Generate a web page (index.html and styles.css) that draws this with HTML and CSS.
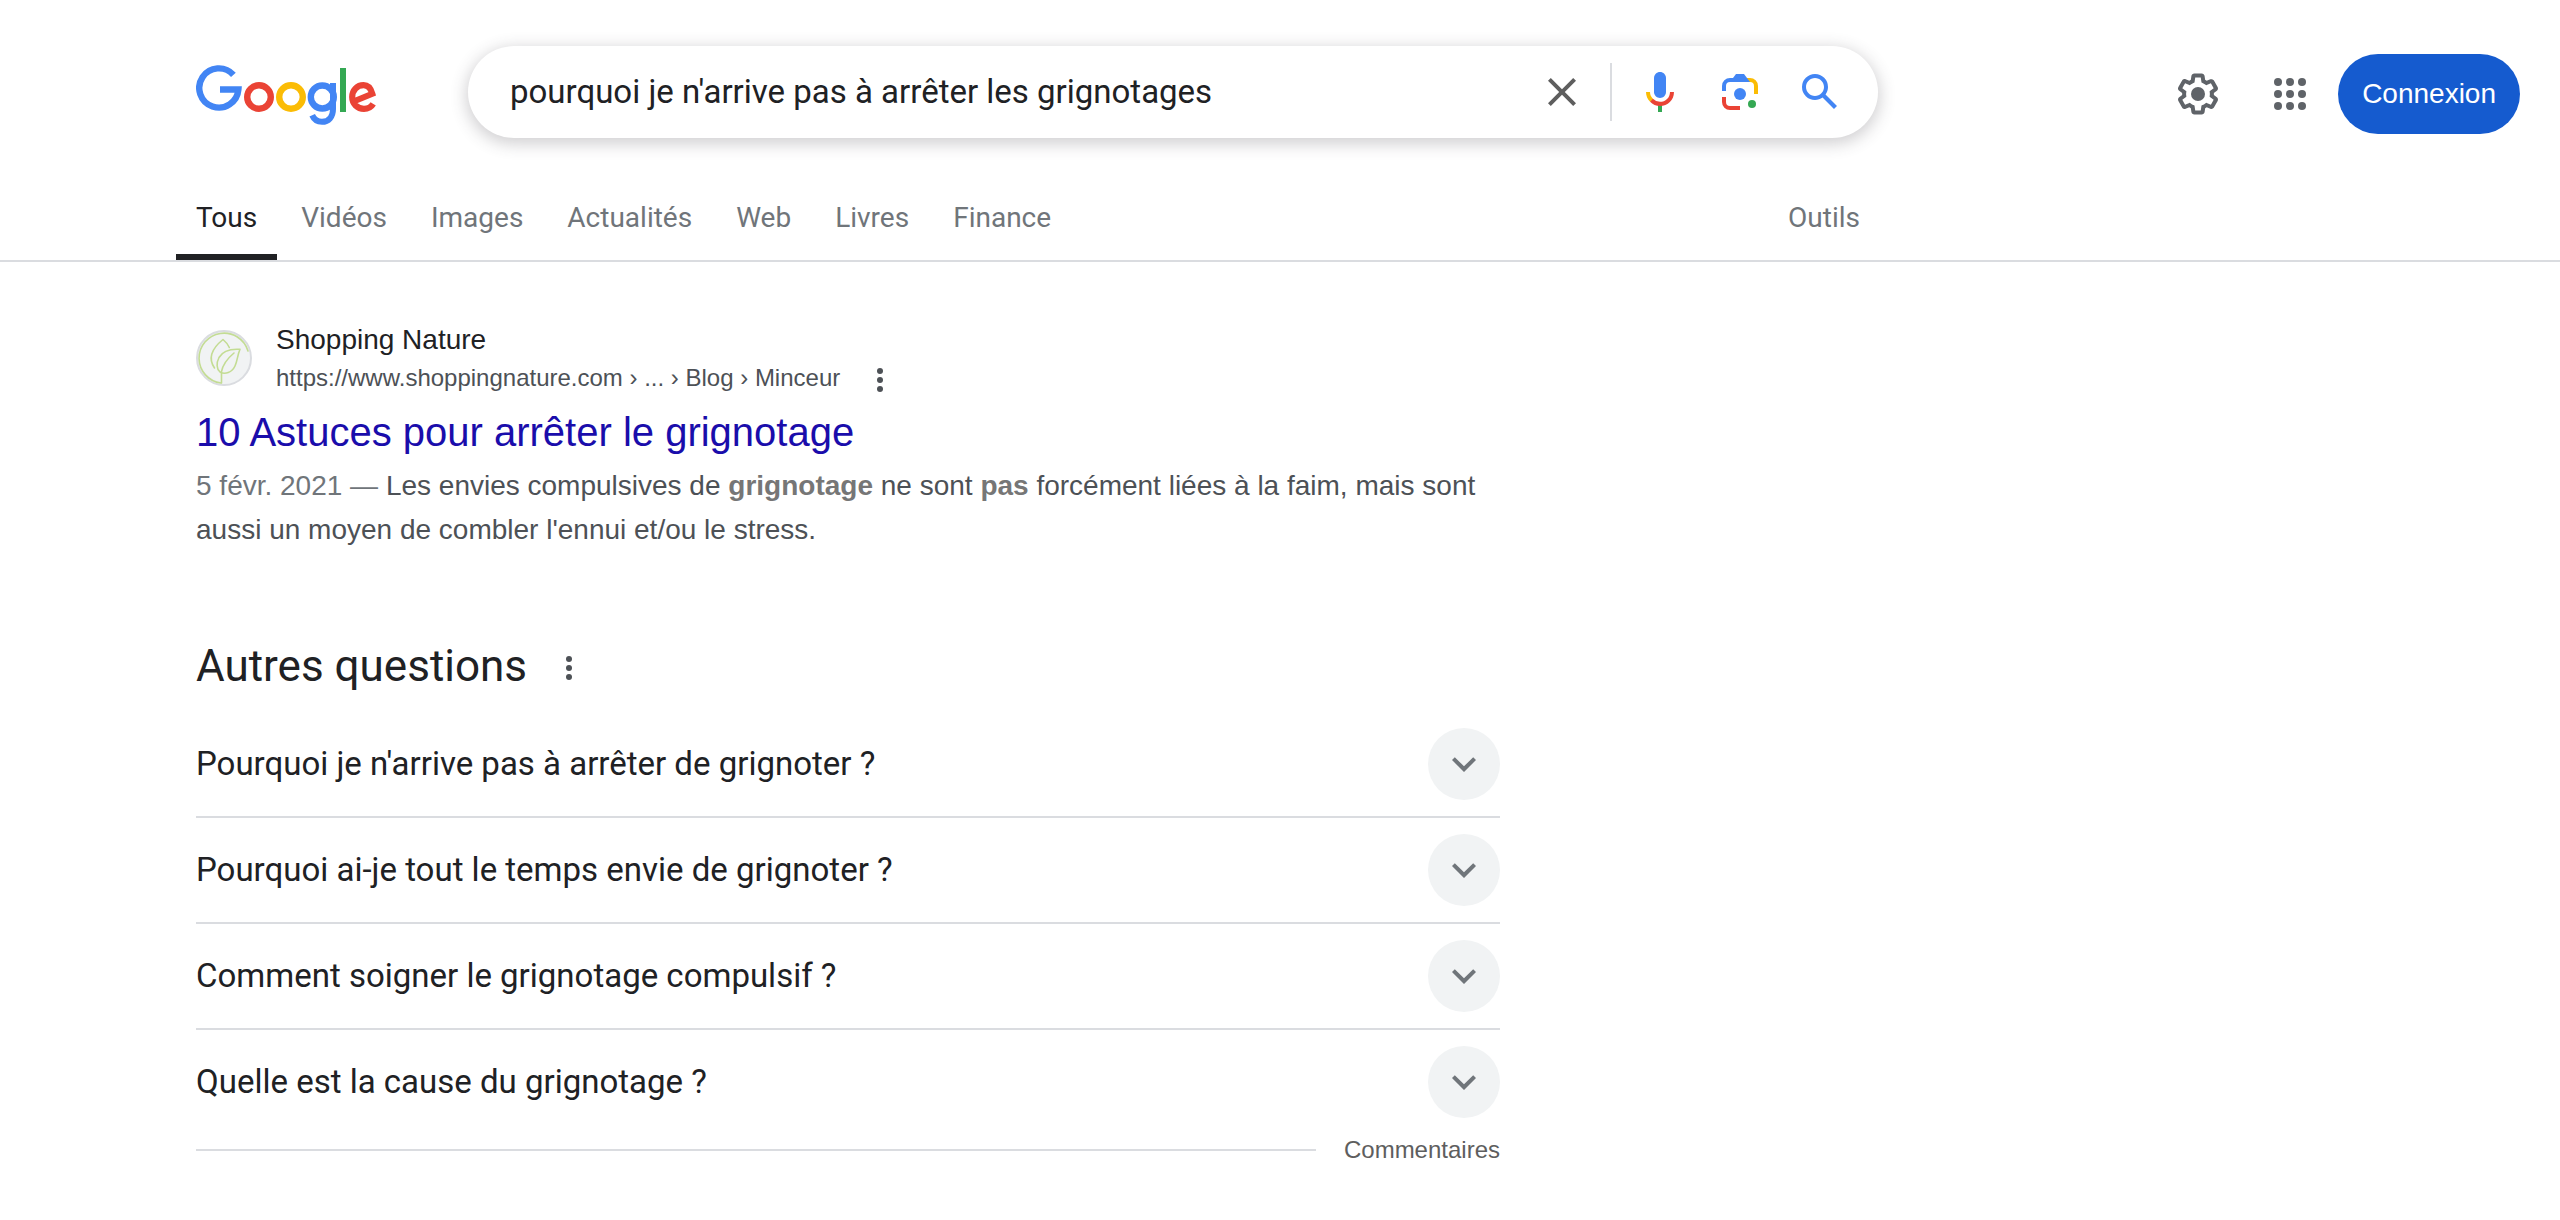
FILE: index.html
```html
<!DOCTYPE html>
<html lang="fr">
<head>
<meta charset="utf-8">
<title>pourquoi je n'arrive pas à arrêter les grignotages - Recherche Google</title>
<meta name="viewport" content="width=device-width, initial-scale=1">
<link rel="stylesheet" href="styles.css">
</head>
<body>
<header class="header">
  <a class="logo" href="#" aria-label="Google">
    <svg width="184" height="72" viewBox="0 0 184 72" fill="none" stroke-width="6.4" aria-hidden="true">
      <path stroke="#4285f4" d="M37.400 18.800A19.600 19.600 0 1 0 42.400 33.500H24"/>
      <circle cx="63" cy="41" r="11.800" stroke="#ea4335"/>
      <circle cx="95" cy="41" r="11.800" stroke="#fbbc05"/>
      <circle cx="126.300" cy="41" r="11.500" stroke="#4285f4"/>
      <path stroke="#4285f4" stroke-width="6" d="M137 27V53c0 8-4.500 12.800-11 12.800-5 0-8.200-2.800-9.800-6.500"/>
      <path stroke="#34a853" stroke-width="6" d="M147 12v44"/>
      <path stroke="#ea4335" stroke-width="6.200" d="M157.500 45.500L176.300 37.800C174.800 32.500 171.500 29.200 167.600 29.200C161 29.200 156.200 34.500 156.200 41C156.200 47.800 161.300 52.800 168 52.800C172 52.800 175.200 51 177.200 47.800"/>
    </svg>
  </a>
  <form class="search" role="search">
    <input class="search-input" type="text" aria-label="Rechercher" value="pourquoi je n'arrive pas à arrêter les grignotages">
    <button class="icon-button clear" type="button" aria-label="Effacer">
      <svg width="48" height="48" viewBox="0 0 24 24"><path fill="#5e5e5e" d="M19 6.410L17.590 5 12 10.590 6.410 5 5 6.410 10.590 12 5 17.590 6.410 19 12 13.410 17.590 19 19 17.590 13.410 12z"/></svg>
    </button>
    <span class="divider"></span>
    <div class="search-tools">
      <button class="icon-button" type="button" aria-label="Recherche vocale">
        <svg width="48" height="48" viewBox="0 0 24 24">
          <path fill="#4285f4" d="M12 15c1.660 0 3-1.310 3-2.970V5.010C15 3.350 13.660 2 12 2S9 3.350 9 5.010v7.020C9 13.690 10.340 15 12 15z"/>
          <path fill="#34a853" d="M11 18.080h2V22h-2z"/>
          <path fill="#fbbc04" d="M7.050 16.870C5.780 15.540 5 14.040 5 12h2c0 1.450.56 2.420 1.470 3.380v.32l-1.150 1.180z"/>
          <path fill="#ea4335" d="M12 16.930a4.970 5.250 0 0 1-3.540-1.550l-1.410 1.490C8.310 18.210 10.070 19 12 19c3.870 0 6.990-2.920 6.990-7H17c0 2.920-2.240 4.930-5 4.930z"/>
        </svg>
      </button>
      <button class="icon-button" type="button" aria-label="Recherche par image">
        <svg width="48" height="48" viewBox="0 0 48 48">
          <path fill="#fbbc04" d="M28 10h6a8 8 0 0 1 8 8v8h-4v-8a4 4 0 0 0-4-4h-3z"/>
          <path fill="#4285f4" d="M6 23v-5a8 8 0 0 1 8-8h3l3-4h8l6 8H14a4 4 0 0 0-4 4v5z"/>
          <path fill="#ea4335" d="M6 29v5a8 8 0 0 0 8 8h10v-4H14a4 4 0 0 1-4-4v-5z"/>
          <circle cx="24" cy="26" r="6" fill="#4285f4"/>
          <circle cx="36" cy="36" r="4" fill="#34a853"/>
        </svg>
      </button>
      <button class="icon-button" type="submit" aria-label="Rechercher">
        <svg width="48" height="48" viewBox="0 0 24 24"><path fill="#4285f4" d="M20.490 19l-5.730-5.730C15.530 12.200 16 10.910 16 9.500A6.500 6.500 0 1 0 9.500 16c1.410 0 2.700-.47 3.770-1.240L19 20.490 20.490 19zM5 9.500C5 7.010 7.010 5 9.500 5S14 7.010 14 9.500 11.990 14 9.500 14 5 11.990 5 9.500z"/></svg>
      </button>
    </div>
  </form>
  <div class="account">
    <button class="icon-button" type="button" aria-label="Paramètres">
      <svg width="48" height="48" viewBox="0 0 24 24" fill="#5f6368">
        <path d="M13.850 22.250h-3.700c-.74 0-1.360-.54-1.450-1.270l-.27-1.890c-.27-.14-.53-.29-.79-.46l-1.800.72c-.7.26-1.470-.03-1.810-.65L2.200 15.530c-.35-.66-.2-1.440.36-1.880l1.530-1.190c-.01-.15-.02-.3-.02-.46 0-.15.01-.31.02-.46l-1.520-1.190c-.59-.45-.74-1.260-.37-1.880l1.850-3.190c.34-.62 1.110-.9 1.790-.63l1.810.73c.26-.17.52-.32.78-.46l.27-1.910c.09-.7.71-1.250 1.440-1.250h3.700c.74 0 1.360.54 1.450 1.270l.27 1.890c.27.14.53.29.79.46l1.800-.72c.71-.26 1.480.03 1.820.65l1.840 3.180c.36.66.2 1.440-.36 1.880l-1.520 1.190c.01.15.02.3.02.46s-.01.31-.02.46l1.520 1.190c.56.45.72 1.230.37 1.860l-1.860 3.220c-.34.62-1.110.9-1.800.63l-1.800-.72c-.26.17-.52.32-.78.46l-.27 1.910c-.1.68-.72 1.220-1.460 1.220zm-3.230-2h2.760l.37-2.550.53-.22c.44-.18.88-.44 1.340-.78l.45-.34 2.380.96 1.380-2.400-2.030-1.580.07-.56c.03-.26.06-.51.06-.78s-.03-.53-.06-.78l-.07-.56 2.030-1.580-1.390-2.400-2.390.96-.45-.35c-.42-.32-.87-.58-1.330-.77l-.52-.22-.37-2.550h-2.760l-.37 2.550-.53.21c-.44.19-.88.44-1.340.79l-.45.33-2.380-.95-1.390 2.390 2.030 1.580-.07.56a7 7 0 0 0-.06.79c0 .26.02.53.06.78l.07.56-2.030 1.580 1.380 2.400 2.390-.96.45.35c.43.33.86.58 1.330.77l.53.22.38 2.550z"/>
        <circle cx="12" cy="12" r="3.500"/>
      </svg>
    </button>
    <button class="icon-button apps" type="button" aria-label="Applications Google">
      <svg width="48" height="48" viewBox="0 0 48 48" fill="#5f6368">
        <circle cx="12" cy="12" r="4"/><circle cx="24" cy="12" r="4"/><circle cx="36" cy="12" r="4"/>
        <circle cx="12" cy="24" r="4"/><circle cx="24" cy="24" r="4"/><circle cx="36" cy="24" r="4"/>
        <circle cx="12" cy="36" r="4"/><circle cx="24" cy="36" r="4"/><circle cx="36" cy="36" r="4"/>
      </svg>
    </button>
    <a class="sign-in" href="#">Connexion</a>
  </div>
</header>

<nav class="tabs">
  <div class="tabs-inner">
    <a class="tab active" href="#" aria-current="page">Tous</a>
    <a class="tab" href="#">Vidéos</a>
    <a class="tab" href="#">Images</a>
    <a class="tab" href="#">Actualités</a>
    <a class="tab" href="#">Web</a>
    <a class="tab" href="#">Livres</a>
    <a class="tab" href="#">Finance</a>
    <button class="tools" type="button">Outils</button>
  </div>
</nav>

<main class="main">
  <article class="result">
    <div class="source">
      <svg class="favicon" width="56" height="56" viewBox="0 0 56 56" fill="none" aria-hidden="true">
        <circle cx="28" cy="28" r="27" fill="#f1f3f4" stroke="#dadce0" stroke-width="2"/>
        <g stroke="#c3dc93" stroke-width="1.600" stroke-linecap="round" stroke-linejoin="round">
          <path d="M52 21A25 25 0 1 0 25 53"/>
          <path d="M18.500 38C13 30 14 20 27 9.500c3 2.500 5 5 6.300 8"/>
          <path d="M44 19.300c-9-.6-17 1-21 8.200-2.800 5.500-2.500 11.500 1 14.500 5 3 12 .5 15-6 2.500-5.500 2.500-11 5-16.700z"/>
          <path d="M38 23c-6 5-11 11-12.500 18.500V53"/>
        </g>
      </svg>
      <div class="source-text">
        <div class="site-name">Shopping Nature</div>
        <div class="site-line">
          <cite class="site-url">https://www.shoppingnature.com › ... › Blog › Minceur</cite>
          <button class="more" type="button" aria-label="À propos de ce résultat">
            <svg width="48" height="24" viewBox="0 0 48 24" fill="#4d5156"><circle cx="24" cy="3" r="3"/><circle cx="24" cy="12" r="3"/><circle cx="24" cy="21" r="3"/></svg>
          </button>
        </div>
      </div>
    </div>
    <h3 class="result-title"><a href="#">10 Astuces pour arrêter le grignotage</a></h3>
    <p class="snippet"><span class="date">5 févr. 2021 — </span>Les envies compulsives de <em>grignotage</em> ne sont <em>pas</em> forcément liées à la faim, mais sont aussi un moyen de combler l'ennui et/ou le stress.</p>
  </article>

  <section class="questions">
    <div class="questions-head">
      <h2>Autres questions</h2>
      <button class="more" type="button" aria-label="À propos des autres questions">
        <svg width="48" height="24" viewBox="0 0 48 24" fill="#4d5156"><circle cx="24" cy="3" r="3"/><circle cx="24" cy="12" r="3"/><circle cx="24" cy="21" r="3"/></svg>
      </button>
    </div>
    <button class="question" type="button" aria-expanded="false">
      <span>Pourquoi je n'arrive pas à arrêter de grignoter ?</span>
      <span class="chevron"><svg width="48" height="48" viewBox="0 0 24 24"><path fill="#70757a" d="M16.590 8.590L12 13.170 7.410 8.590 6 10l6 6 6-6z"/></svg></span>
    </button>
    <button class="question" type="button" aria-expanded="false">
      <span>Pourquoi ai-je tout le temps envie de grignoter ?</span>
      <span class="chevron"><svg width="48" height="48" viewBox="0 0 24 24"><path fill="#70757a" d="M16.590 8.590L12 13.170 7.410 8.590 6 10l6 6 6-6z"/></svg></span>
    </button>
    <button class="question" type="button" aria-expanded="false">
      <span>Comment soigner le grignotage compulsif ?</span>
      <span class="chevron"><svg width="48" height="48" viewBox="0 0 24 24"><path fill="#70757a" d="M16.590 8.590L12 13.170 7.410 8.590 6 10l6 6 6-6z"/></svg></span>
    </button>
    <button class="question" type="button" aria-expanded="false">
      <span>Quelle est la cause du grignotage ?</span>
      <span class="chevron"><svg width="48" height="48" viewBox="0 0 24 24"><path fill="#70757a" d="M16.590 8.590L12 13.170 7.410 8.590 6 10l6 6 6-6z"/></svg></span>
    </button>
    <div class="feedback">
      <span class="feedback-line"></span>
      <a href="#">Commentaires</a>
    </div>
  </section>
</main>
</body>
</html>
```

FILE: styles.css
```css
* { box-sizing: border-box; }

body {
  margin: 0;
  background: #fff;
  color: #202124;
  font-family: "Liberation Sans", Arial, sans-serif;
}

a { color: inherit; text-decoration: none; }

button {
  padding: 0;
  border: 0;
  background: none;
  color: inherit;
  font: inherit;
  cursor: pointer;
}

svg { display: block; }

/* Header */
.header {
  display: flex;
  align-items: center;
  padding: 46px 40px 0 196px;
}

.logo { flex: none; width: 272px; }

.search {
  flex: 0 1 1410px;
  display: flex;
  align-items: center;
  height: 92px;
  padding: 0 34px 0 42px;
  border-radius: 46px;
  background: #fff;
  box-shadow: 0 4px 16px 2px rgba(64, 60, 67, 0.24);
}

.search-input {
  flex: 1;
  min-width: 0;
  height: 48px;
  padding: 0;
  border: 0;
  outline: 0;
  background: none;
  color: #202124;
  font: 33px/48px Roboto, sans-serif;
}

.icon-button { flex: none; }

.divider {
  width: 2px;
  height: 58px;
  margin: 0 24px;
  background: #dadce0;
}

.search-tools { display: flex; gap: 32px; }

.account {
  display: flex;
  align-items: center;
  gap: 24px;
  margin-left: auto;
  padding-top: 4px;
}

.account .apps { margin-left: 20px; }

.sign-in {
  padding: 0 24px;
  border-radius: 40px;
  background: #155bcf;
  color: #fff;
  font-size: 28px;
  line-height: 80px;
}

/* Tabs */
.tabs {
  padding: 56px 0 0 176px;
  border-bottom: 2px solid #dadce0;
  color: #70757a;
  font: 28px/40px Roboto, sans-serif;
}

.tabs-inner {
  display: flex;
  align-items: flex-start;
  gap: 4px;
  max-width: 1684px;
}

.tab {
  padding: 4px 20px 16px;
  border-bottom: 6px solid transparent;
}

.tab.active { border-color: #202124; color: #202124; }

.tools { margin-left: auto; padding-top: 4px; }

/* Results */
.main {
  max-width: 1500px;
  padding: 60px 0 40px 196px;
}

.source { display: flex; align-items: flex-start; gap: 24px; }

.favicon { margin-top: 8px; }

.site-name { font-size: 28px; line-height: 36px; }

.site-line { display: flex; align-items: center; gap: 16px; }

.site-url {
  color: #4d5156;
  font-size: 24px;
  font-style: normal;
  line-height: 40px;
}

.more { padding-top: 4px; }

.result-title {
  margin: 8px 0 6px;
  color: #1a0dab;
  font-size: 40px;
  font-weight: 400;
  line-height: 52px;
}

.snippet {
  margin: 0;
  color: #4d5156;
  font-size: 28px;
  line-height: 44px;
}

.date { color: #70757a; }

.snippet em { color: #767676; font-style: normal; font-weight: 700; }

/* Related questions */
.questions { margin-top: 84px; font-family: Roboto, sans-serif; }

.questions-head {
  display: flex;
  align-items: center;
  gap: 18px;
  margin-bottom: 16px;
}

.questions-head h2 {
  margin: 0;
  font-size: 44px;
  font-weight: 400;
  line-height: 60px;
}

.question {
  display: flex;
  align-items: center;
  justify-content: space-between;
  width: 100%;
  padding: 16px 0;
  border-bottom: 2px solid #dadce0;
  font-size: 33px;
  line-height: 44px;
  text-align: left;
}

.question:nth-of-type(4) { border-bottom: 0; }

.chevron {
  display: grid;
  place-items: center;
  width: 72px;
  height: 72px;
  border-radius: 50%;
  background: #f1f3f4;
}

.feedback {
  display: flex;
  align-items: center;
  gap: 28px;
  color: #5e5e5e;
  font: 24px/32px "Liberation Sans", Arial, sans-serif;
}

.feedback-line { flex: 1; height: 2px; background: #dadce0; }
```
